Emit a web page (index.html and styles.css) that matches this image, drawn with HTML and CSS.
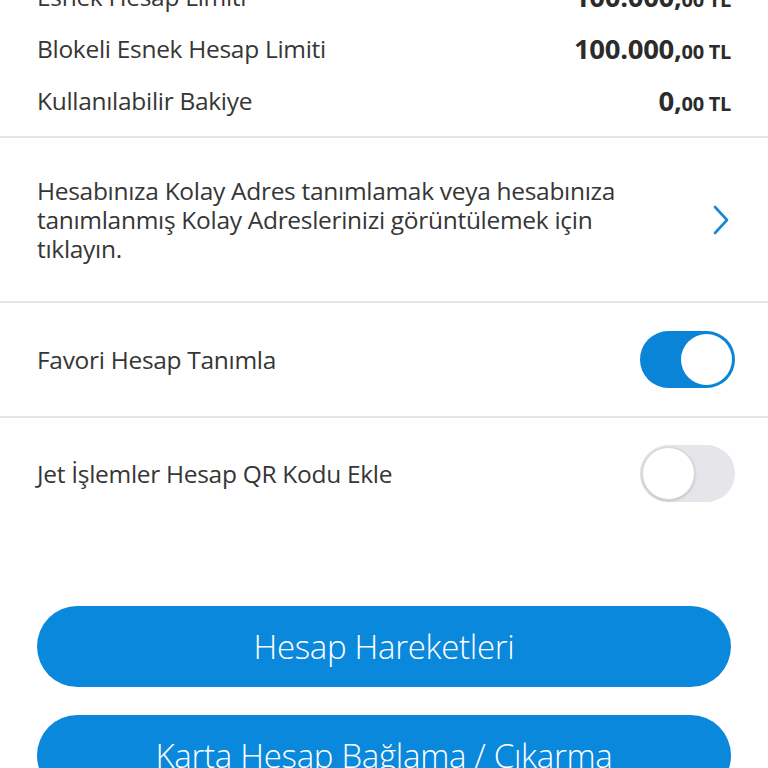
FILE: index.html
```html
<!DOCTYPE html>
<html lang="tr">
<head>
<meta charset="utf-8">
<link rel="stylesheet" href="styles.css">
</head>
<body>
<div class="page">
  <section class="limits">
    <div class="row"><span class="label">Esnek Hesap Limiti</span><span class="value">100.000,<small>00 TL</small></span></div>
    <div class="row"><span class="label">Blokeli Esnek Hesap Limiti</span><span class="value">100.000,<small>00 TL</small></span></div>
    <div class="row"><span class="label">Kullanılabilir Bakiye</span><span class="value">0,<small>00 TL</small></span></div>
  </section>
  <section class="link-row">
    <p class="link-text">Hesabınıza Kolay Adres tanımlamak veya hesabınıza tanımlanmış Kolay Adreslerinizi görüntülemek için tıklayın.</p>
    <svg class="chevron" width="20" height="32" viewBox="0 0 20 32"><path d="M4 3 L16 16 L4 29" fill="none" stroke="#1a86d6" stroke-width="2.6" stroke-linecap="round" stroke-linejoin="round"/></svg>
  </section>
  <section class="toggle-row">
    <span class="label">Favori Hesap Tanımla</span>
    <span class="switch on"><span class="knob"></span></span>
  </section>
  <section class="toggle-row last">
    <span class="label">Jet İşlemler Hesap QR Kodu Ekle</span>
    <span class="switch"><span class="knob"></span></span>
  </section>
  <div class="actions">
    <button class="btn">Hesap Hareketleri</button>
    <button class="btn">Karta Hesap Bağlama / Çıkarma</button>
  </div>
</div>
</body>
</html>
```
FILE: styles.css
```css
html, body {
  margin: 0;
  padding: 0;
  background: #ffffff;
}
body {
  font-family: "Open Sans", "Noto Sans", sans-serif;
  color: #363636;
  overflow: hidden;
}
.page {
  width: 768px;
}
.limits {
  margin-top: -30px;
  padding: 0 37px 10px 37px;
  border-bottom: 2px solid #e6e6e6;
}
.row {
  height: 52px;
  display: flex;
  align-items: center;
  justify-content: space-between;
}
.label {
  font-size: 24.5px;
  color: #363636;
  letter-spacing: -0.3px;
}
.value {
  font-size: 27.5px;
  font-weight: 700;
  color: #2b2b2b;
  letter-spacing: -0.3px;
}
.value small {
  font-size: 20px;
  font-weight: 700;
}
.link-row {
  display: flex;
  align-items: center;
  justify-content: space-between;
  padding: 38px 37px 38px 37px;
  border-bottom: 2px solid #e6e6e6;
}
.link-text {
  margin: 0;
  width: 640px;
  font-size: 24.5px;
  line-height: 29px;
  letter-spacing: -0.3px;
}
.toggle-row {
  height: 113px;
  display: flex;
  align-items: center;
  justify-content: space-between;
  padding: 0 33px 0 37px;
  border-bottom: 2px solid #e6e6e6;
}
.toggle-row.last {
  height: 111px;
  border-bottom: none;
}
.switch {
  width: 95px;
  height: 57px;
  box-sizing: border-box;
  border-radius: 29px;
  background: #e6e6ea;
  display: flex;
  align-items: center;
  padding: 2px;
}
.switch .knob {
  width: 53px;
  height: 53px;
  box-sizing: border-box;
  border-radius: 50%;
  background: #ffffff;
  border: 1px solid #d6d6d6;
  box-shadow: 0 1px 3px rgba(0,0,0,0.18);
}
.switch.on {
  background: #0a84d6;
  justify-content: flex-end;
  padding: 3px;
}
.switch.on .knob {
  width: 51px;
  height: 51px;
  border: none;
  box-shadow: none;
}
.actions {
  padding: 77px 37px 0 37px;
  display: flex;
  flex-direction: column;
  gap: 28px;
}
.btn {
  height: 81px;
  border: none;
  border-radius: 41px;
  background: #0a88dc;
  color: #ffffff;
  font-family: "Open Sans", "Noto Sans", sans-serif;
  font-weight: 300;
  font-size: 33px;
  letter-spacing: -0.3px;
}
```
